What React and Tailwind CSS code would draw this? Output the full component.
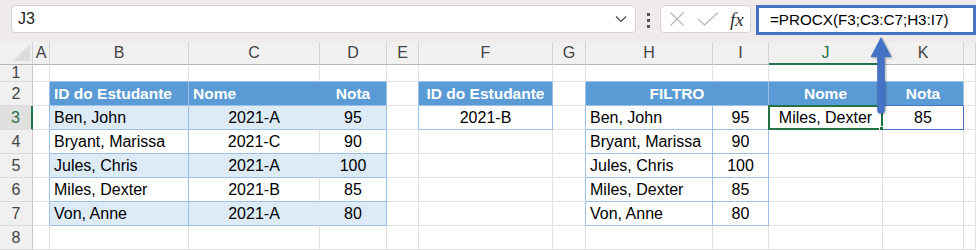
import React from "react";

const COLS = ["A", "B", "C", "D", "E", "F", "G", "H", "I", "J", "K", "L"];
const ROWS = [1, 2, 3, 4, 5, 6, 7, 8];

const cells = {
  B2: "ID do Estudante",
  C2: "Nome",
  D2: "Nota",
  F2: "ID do Estudante",
  H2: "FILTRO",
  J2: "Nome",
  K2: "Nota",
  B3: "Ben, John",
  C3: "2021-A",
  D3: "95",
  B4: "Bryant, Marissa",
  C4: "2021-C",
  D4: "90",
  B5: "Jules, Chris",
  C5: "2021-A",
  D5: "100",
  B6: "Miles, Dexter",
  C6: "2021-B",
  D6: "85",
  B7: "Von, Anne",
  C7: "2021-A",
  D7: "80",
  F3: "2021-B",
  H3: "Ben, John",
  I3: "95",
  H4: "Bryant, Marissa",
  I4: "90",
  H5: "Jules, Chris",
  I5: "100",
  H6: "Miles, Dexter",
  I6: "85",
  H7: "Von, Anne",
  I7: "80",
  J3: "Miles, Dexter",
  K3: "85",
};

function rightClass(c, r) {
  if (c === "H" && r === 2) return "border-r-[#9bc2e6]";
  if (r >= 2 && r <= 7 && ["A", "B", "D", "G", "I"].includes(c)) return "border-r-[#9bc2e6]";
  if ((c === "E" || c === "F") && (r === 2 || r === 3)) return "border-r-[#9bc2e6]";
  if (c === "H" && r >= 3 && r <= 7) return "border-r-[#9bc2e6]";
  if ((c === "J" || c === "K") && r === 2) return "border-r-[#9bc2e6]";
  if (c === "K" && r === 3) return "border-r-[#4472c4]";
  if (c === "C" && r === 2) return "border-r-[#5b9bd5]";
  if (c === "C" && (r === 3 || r === 5 || r === 7)) return "border-r-[#ddebf7]";
  return "border-r-[#e1e1e1]";
}

function bottomClass(c, r) {
  if (r === 1 && ["B", "C", "D", "F", "H", "I", "J", "K"].includes(c)) return "border-b-[#9bc2e6]";
  if (["B", "C", "D", "H", "I"].includes(c) && r >= 2 && r <= 7) return "border-b-[#9bc2e6]";
  if (c === "F" && (r === 2 || r === 3)) return "border-b-[#9bc2e6]";
  if (c === "J" && r === 2) return "border-b-[#9bc2e6]";
  if (c === "K" && (r === 2 || r === 3)) return "border-b-[#4472c4]";
  return "border-b-[#e1e1e1]";
}

function bgClass(c, r) {
  if (r === 2 && ["B", "C", "D", "F", "H", "I", "J", "K"].includes(c)) return "bg-[#5b9bd5]";
  if ((r === 3 || r === 5 || r === 7) && ["B", "C", "D"].includes(c)) return "bg-[#ddebf7]";
  return "bg-white";
}

function alignClass(c, r) {
  if (r === 2 && (c === "B" || c === "C")) return "justify-start";
  if (r === 2) return "justify-center";
  if (c === "B" || c === "H") return "justify-start";
  return "justify-center";
}

function Cell({ c, r }) {
  const key = `${c}${r}`;
  const text = cells[key];
  const head = r === 2;
  const span = key === "H2" ? "col-span-2" : "";
  return (
    <div
      className={`relative flex items-center overflow-visible whitespace-nowrap border-r border-b px-[4px] ${span} ${rightClass(c, r)} ${bottomClass(c, r)} ${bgClass(c, r)} ${alignClass(c, r)} ${
        head ? "text-[15.5px] font-bold text-white" : "text-[16px] text-black"
      }`}
    >
      {text}
      {key === "J3" ? (
        <div className="absolute -left-px -top-px -right-px -bottom-px border-2 border-[#217346]">
          <div className="absolute -right-[4px] -bottom-[4px] h-[6px] w-[6px] border border-white bg-[#217346]" />
        </div>
      ) : null}
    </div>
  );
}

export default function App() {
  return (
    <div className="relative h-[250px] w-[976px] overflow-hidden bg-white font-['Liberation_Sans',Arial,sans-serif]">
      <div className="flex h-[42px] items-start bg-[#eeebea] pl-[11px] pt-[5px]">
        <div className="flex h-[28px] w-[625px] items-center justify-between rounded-[4px] border border-[#d6d3d2] bg-white pl-[6px] pr-[8px]">
          <span className="text-[16px] text-[#222]">J3</span>
          <svg width="12" height="8" viewBox="0 0 12 8">
            <path d="M1 1.5 L6 6.5 L11 1.5" fill="none" stroke="#444" strokeWidth="1.1" />
          </svg>
        </div>
        <div className="ml-[11px] mr-[10px] mt-[8px] flex flex-col gap-[3px]">
          <div className="h-[3px] w-[3px] bg-[#555]" />
          <div className="h-[3px] w-[3px] bg-[#555]" />
          <div className="h-[3px] w-[3px] bg-[#555]" />
        </div>
        <div className="flex h-[28px] w-[91px] items-center rounded-[4px] border border-[#d6d3d2] bg-white pl-[8px]">
          <svg width="16" height="16" viewBox="0 0 16 16">
            <path d="M1.5 1.5 L14.5 14.5 M14.5 1.5 L1.5 14.5" stroke="#b4b4b4" strokeWidth="1.2" />
          </svg>
          <svg className="ml-[12px]" width="22" height="16" viewBox="0 0 22 16">
            <path d="M1 8 L7.5 14 L21 1.5" fill="none" stroke="#b4b4b4" strokeWidth="1.2" />
          </svg>
          <span className="ml-[11px] font-['Liberation_Serif',serif] text-[19px] italic leading-none text-[#333]">
            fx
          </span>
        </div>
        <div className="ml-[5px] flex h-[30px] flex-1 items-center border-[3px] border-[#4472c4] bg-white pl-[11px]">
          <span className="text-[15.2px] text-black">=PROCX(F3;C3:C7;H3:I7)</span>
        </div>
      </div>

      <div className="grid grid-cols-[33px_17px_139px_131px_67px_32px_134px_33px_127px_56px_114px_81px_1fr] grid-rows-[23px_17px_24px_24px_24px_24px_24px_24px_24px]">
        <div className="flex items-end justify-end border-r border-b border-r-[#d4d4d4] border-b-[#b5b5b5] bg-[#f0f0f0] pb-[3px] pr-[2px]">
          <svg width="17" height="17" viewBox="0 0 17 17">
            <polygon points="17,0 17,17 0,17" fill="#dcdcdc" />
          </svg>
        </div>
        {COLS.map((c) => (
          <div
            key={c}
            className={`flex items-center justify-center border-r bg-[#f0f0f0] text-[16px] border-r-[#d4d4d4] ${
              c === "J" ? "border-b-2 border-b-[#217346] text-[#217346]" : "border-b border-b-[#b5b5b5] text-[#444]"
            }`}
          >
            {c === "L" ? "" : c}
          </div>
        ))}
        {ROWS.map((r) => (
          <React.Fragment key={r}>
            <div
              className={`flex items-center justify-center border-b border-b-[#dcdcdc] text-[16px] ${
                r === 3
                  ? "border-r-2 border-r-[#217346] bg-[#e0e0e0] text-[#217346]"
                  : "border-r border-r-[#c8c8c8] bg-[#f0f0f0] text-[#444]"
              }`}
            >
              {r}
            </div>
            {COLS.filter((c) => !(r === 2 && c === "I")).map((c) => (
              <Cell key={c} c={c} r={r} />
            ))}
          </React.Fragment>
        ))}
      </div>

      <svg
        className="pointer-events-none absolute left-[866px] top-[34px] drop-shadow-[1px_1px_1px_rgba(0,0,0,0.35)]"
        width="30"
        height="84"
        viewBox="0 0 30 84"
      >
        <path
          d="M15 3 L25.5 23 L18.8 23 L18.8 76 Q18.8 79.5 15 79.5 Q11.2 79.5 11.2 76 L11.2 23 L4.5 23 Z"
          fill="#4472c4"
        />
      </svg>
    </div>
  );
}
